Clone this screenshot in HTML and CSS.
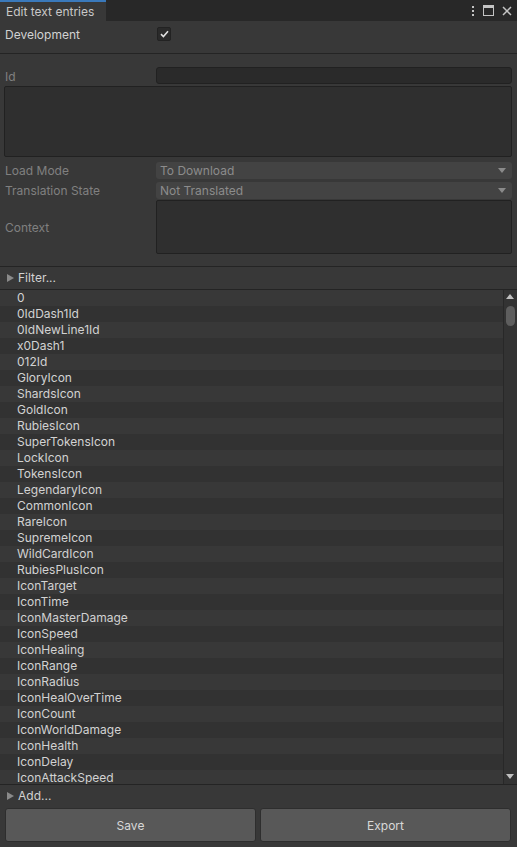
FILE: index.html
```html
<!DOCTYPE html>
<html lang="en">
<head>
    <meta charset="UTF-8">
    <title>Edit text entries</title>
    <link rel="stylesheet" href="styles.css">
</head>
<body>
    <div class="window">
        <div class="tabbar">
            <div class="tab">Edit text entries</div>
            <div class="tab-icons">
                <svg width="4" height="12" viewBox="0 0 4 12"><rect x="1" y="1" width="2" height="2" fill="#c4c4c4"/><rect x="1" y="5" width="2" height="2" fill="#c4c4c4"/><rect x="1" y="9" width="2" height="2" fill="#c4c4c4"/></svg>
                <svg width="11" height="11" viewBox="0 0 11 11"><rect x="0.5" y="0.5" width="10" height="10" fill="none" stroke="#c4c4c4"/><rect x="0" y="0" width="11" height="3" fill="#c4c4c4"/></svg>
                <svg width="10" height="10" viewBox="0 0 10 10"><path d="M1 1 L9 9 M9 1 L1 9" stroke="#c4c4c4" stroke-width="1.5"/></svg>
            </div>
        </div>

        <div class="row dev-row">
            <label class="lbl bright">Development</label>
            <span class="checkbox">
                <svg width="9" height="8" viewBox="0 0 9 8"><path d="M1 4.2 L3.4 6.5 L8 1.2" fill="none" stroke="#e0e0e0" stroke-width="1.6"/></svg>
            </span>
        </div>

        <div class="section">
            <div class="row">
                <label class="lbl">Id</label>
                <div class="field"></div>
            </div>
            <div class="textarea big"></div>
            <div class="row">
                <label class="lbl">Load Mode</label>
                <div class="dropdown">To Download<span class="arrow"></span></div>
            </div>
            <div class="row">
                <label class="lbl">Translation State</label>
                <div class="dropdown">Not Translated<span class="arrow"></span></div>
            </div>
            <div class="row context-row">
                <label class="lbl">Context</label>
                <div class="textarea ctx"></div>
            </div>
        </div>

        <div class="foldout filter"><span class="tri"></span>Filter...</div>

        <div class="list-wrap">
            <ul class="list">
                <li>0</li>
                <li>0IdDash1Id</li>
                <li>0IdNewLine1Id</li>
                <li>x0Dash1</li>
                <li>012Id</li>
                <li>GloryIcon</li>
                <li>ShardsIcon</li>
                <li>GoldIcon</li>
                <li>RubiesIcon</li>
                <li>SuperTokensIcon</li>
                <li>LockIcon</li>
                <li>TokensIcon</li>
                <li>LegendaryIcon</li>
                <li>CommonIcon</li>
                <li>RareIcon</li>
                <li>SupremeIcon</li>
                <li>WildCardIcon</li>
                <li>RubiesPlusIcon</li>
                <li>IconTarget</li>
                <li>IconTime</li>
                <li>IconMasterDamage</li>
                <li>IconSpeed</li>
                <li>IconHealing</li>
                <li>IconRange</li>
                <li>IconRadius</li>
                <li>IconHealOverTime</li>
                <li>IconCount</li>
                <li>IconWorldDamage</li>
                <li>IconHealth</li>
                <li>IconDelay</li>
                <li>IconAttackSpeed</li>
            </ul>
            <div class="scrollbar">
                <span class="up"></span>
                <span class="thumb"></span>
                <span class="down"></span>
            </div>
        </div>

        <div class="foldout add"><span class="tri"></span>Add...</div>

        <div class="buttons">
            <button class="btn">Save</button>
            <button class="btn">Export</button>
        </div>
    </div>
</body>
</html>
```

FILE: styles.css
```css
html, body {
    margin: 0;
    padding: 0;
    background-color: #383838;
    font-family: Inter, "Noto Sans", sans-serif;
    font-size: 12px;
    color: #d2d2d2;
}
.window {
    width: 517px;
    height: 847px;
    display: flex;
    flex-direction: column;
    overflow: hidden;
}
.tabbar {
    height: 21px;
    background-color: #282828;
    display: flex;
    justify-content: space-between;
    flex-shrink: 0;
}
.tab {
    width: 100px;
    padding-left: 6px;
    background-color: #383838;
    border-top: 2px solid #3a79bb;
    line-height: 19px;
    font-size: 12px;
    color: #c8c8c8;
}
.tab-icons {
    display: flex;
    align-items: center;
    gap: 8px;
    padding-right: 5px;
}
.row {
    display: flex;
    align-items: center;
    padding: 0 5px 0 5px;
}
.lbl {
    width: 151px;
    flex-shrink: 0;
    color: #808080;
}
.lbl.bright {
    color: #d2d2d2;
}
.dev-row {
    height: 26px;
    padding-bottom: 6px;
    border-bottom: 1px solid #242424;
}
.checkbox {
    width: 12px;
    height: 12px;
    margin-left: 1px;
    background-color: #2a2a2a;
    border: 1px solid #222;
    border-radius: 2px;
    display: flex;
    align-items: center;
    justify-content: center;
}
.section {
    padding-top: 12px;
    padding-bottom: 12px;
    border-bottom: 1px solid #242424;
}
.section .row {
    height: 20px;
}
.field {
    flex: 1;
    height: 15px;
    background-color: #2a2a2a;
    border: 1px solid #212121;
    border-radius: 3px;
    margin-bottom: 2px;
}
.textarea {
    background-color: #2f2f2f;
    border: 1px solid #212121;
    border-radius: 2px;
}
.textarea.big {
    height: 69px;
    margin: 0 5px 3px 4px;
}
.dropdown {
    flex: 1;
    height: 17px;
    line-height: 17px;
    padding-left: 4px;
    background-color: #434343;
    border-radius: 3px;
    color: #8c8c8c;
    position: relative;
}
.arrow {
    position: absolute;
    right: 6px;
    top: 6px;
    border-left: 4px solid transparent;
    border-right: 4px solid transparent;
    border-top: 5px solid #8a8a8a;
}
.section .context-row {
    height: 54px;
}
.textarea.ctx {
    flex: 1;
    height: 52px;
}
.foldout {
    height: 22px;
    line-height: 22px;
    padding-left: 7px;
    display: flex;
    align-items: center;
    color: #d2d2d2;
}
.filter {
    border-bottom: 1px solid #242424;
}
.tri {
    width: 0;
    height: 0;
    border-top: 4px solid transparent;
    border-bottom: 4px solid transparent;
    border-left: 7px solid #8a8a8a;
    margin-right: 4px;
}
.list-wrap {
    height: 494px;
    display: flex;
    border-bottom: 1px solid #242424;
    overflow: hidden;
    flex-shrink: 0;
}
.list {
    flex: 1;
    margin: 0;
    padding: 0;
    list-style: none;
}
.list li {
    height: 16px;
    line-height: 16px;
    padding-left: 17px;
    background-color: #383838;
}
.list li:nth-child(even) {
    background-color: #323232;
}
.scrollbar {
    width: 13px;
    background-color: #333;
    border-left: 1px solid #282828;
    position: relative;
}
.up, .down {
    position: absolute;
    left: 2px;
    border-left: 4px solid transparent;
    border-right: 4px solid transparent;
}
.up {
    top: 4px;
    border-bottom: 5px solid #c0c0c0;
}
.down {
    bottom: 5px;
    border-top: 5px solid #c0c0c0;
}
.thumb {
    position: absolute;
    left: 2px;
    top: 16px;
    width: 9px;
    height: 20px;
    border-radius: 5px;
    background-color: #5e5e5e;
}
.buttons {
    display: flex;
    gap: 4px;
    padding: 1px 6px 0 5px;
}
.btn {
    flex: 1;
    height: 34px;
    background-color: #585858;
    border: 1px solid #2e2e2e;
    border-radius: 3px;
    color: #d8d8d8;
    font-family: Inter, "Noto Sans", sans-serif;
    font-size: 12px;
}
```
